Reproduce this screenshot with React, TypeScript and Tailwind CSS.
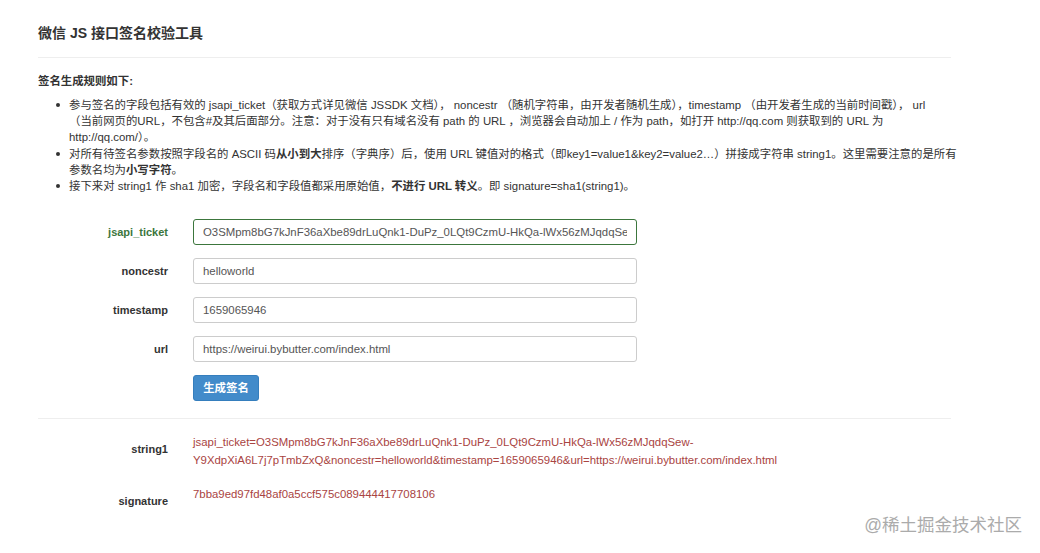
import React from 'react';

const TICKET = 'O3SMpm8bG7kJnF36aXbe89drLuQnk1-DuPz_0LQt9CzmU-HkQa-lWx56zMJqdqSew-Y9XdpXiA6L7j7pTmbZxQ';

const fields = [
  { name: 'jsapi_ticket', value: TICKET, ok: true },
  { name: 'noncestr', value: 'helloworld' },
  { name: 'timestamp', value: '1659065946' },
  { name: 'url', value: 'https://weirui.bybutter.com/index.html' },
];

function Bullet({ children }: { children: React.ReactNode }) {
  return (
    <li className="flex">
      <span className="flex h-[16.2px] w-[13px] shrink-0 items-center">
        <span className="h-[4px] w-[4px] rounded-full bg-[#333]" />
      </span>
      <span>{children}</span>
    </li>
  );
}

export default function App() {
  return (
    <div
      className="min-h-screen bg-white text-[11.4px] text-[#333]"
      style={{ fontFamily: '"Liberation Sans", "Noto Sans CJK SC", sans-serif' }}
    >
      <div className="relative ml-[38px] w-[913px] pt-[24px]">
        <h1 className="text-[14px] font-semibold leading-[18px] text-[#333]">微信 JS 接口签名校验工具</h1>
        <div className="mt-[15px] border-t border-[#eeeeee]" />

        <p className="mt-[15px] font-bold leading-[16px]">签名生成规则如下:</p>
        <ul className="mt-[8px] pl-[18px] leading-[16.2px] whitespace-nowrap">
          <Bullet>
            参与签名的字段包括有效的 jsapi_ticket（获取方式详见微信 JSSDK 文档）， noncestr （随机字符串，由开发者随机生成），timestamp （由开发者生成的当前时间戳）， url
            <br />
            （当前网页的URL，不包含#及其后面部分。注意：对于没有只有域名没有 path 的 URL ，浏览器会自动加上 / 作为 path，如打开 http://qq.com 则获取到的 URL 为
            <br />
            http://qq.com/）。
          </Bullet>
          <Bullet>
            对所有待签名参数按照字段名的 ASCII 码<b>从小到大</b>排序（字典序）后，使用 URL 键值对的格式（即key1=value1&amp;key2=value2…）拼接成字符串 string1。这里需要注意的是所有
            <br />
            参数名均为<b>小写字符</b>。
          </Bullet>
          <Bullet>
            接下来对 string1 作 sha1 加密，字段名和字段值都采用原始值，<b>不进行 URL 转义</b>。即 signature=sha1(string1)。
          </Bullet>
        </ul>

        {/* form */}
        <div className="mt-[25px] flex flex-col gap-[13px]">
          {fields.map((f) => (
            <div key={f.name} className="flex items-center gap-[25px]">
              <label
                className={`w-[130px] text-right text-[11px] font-bold ${f.ok ? 'text-[#3c763d]' : 'text-[#333]'}`}
              >
                {f.name}
              </label>
              <input
                readOnly
                defaultValue={f.value}
                className={`h-[26px] w-[444px] rounded-[3px] border bg-white px-[9px] text-[11.4px] text-[#555] outline-none ${
                  f.ok ? 'border-[#3c763d]' : 'border-[#cccccc]'
                }`}
                style={{ fontFamily: '"Liberation Sans", "Noto Sans CJK SC", sans-serif' }}
              />
            </div>
          ))}
          <div className="flex gap-[25px]">
            <div className="w-[130px]" />
            <button className="h-[26px] w-[66px] rounded-[3px] border border-[#357ebd] bg-[#428bca] text-[11.4px] font-bold text-white">
              生成签名
            </button>
          </div>
        </div>

        <div className="mt-[17px] border-t border-[#eeeeee]" />

        {/* result */}
        <div className="mt-[14px] flex flex-col gap-[16px]">
          <div className="flex gap-[25px]">
            <div className="w-[130px] pt-[7px] text-right text-[11px] font-bold leading-[18px]">string1</div>
            <div className="whitespace-nowrap leading-[18px] text-[#a94442]">
              jsapi_ticket={TICKET.slice(0, 66)}
              <br />
              {TICKET.slice(66)}&amp;noncestr=helloworld&amp;timestamp=1659065946&amp;url=https://weirui.bybutter.com/index.html
            </div>
          </div>
          <div className="flex gap-[25px]">
            <div className="w-[130px] pt-[7px] text-right text-[11px] font-bold leading-[18px]">signature</div>
            <div className="leading-[18px] text-[#a94442]">7bba9ed97fd48af0a5ccf575c089444417708106</div>
          </div>
        </div>
      </div>

      {/* watermark */}
      <div className="absolute right-[18px] top-[513px] text-[17.5px] leading-[24px] text-[#ababab]">@稀土掘金技术社区</div>
    </div>
  );
}
